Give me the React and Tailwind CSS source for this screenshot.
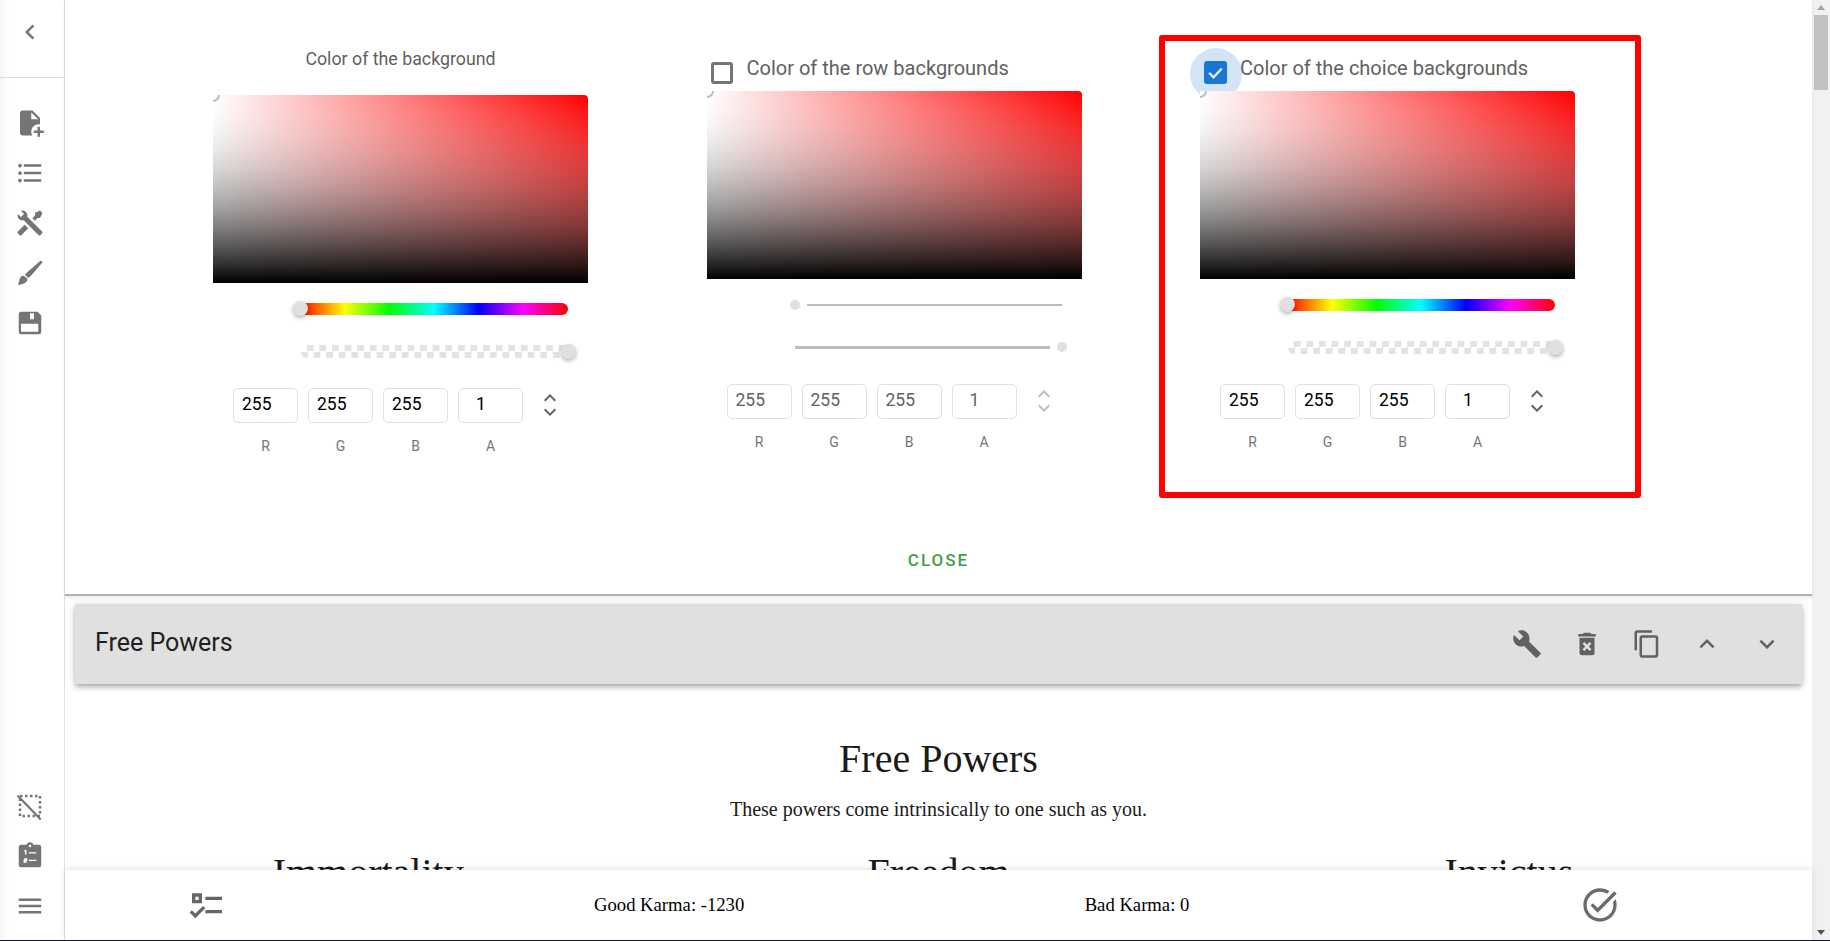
import React from 'react';

const Icon = ({ d, size = 30, className = '', children, fillRule }) => (
  <svg width={size} height={size} viewBox="0 0 24 24" fill="currentColor" className={`shrink-0 ${className}`}>
    {d && <path d={d} fillRule={fillRule} />}
    {children}
  </svg>
);

const paths = {
  chevronLeft: 'M15.41 7.41 14 6l-6 6 6 6 1.41-1.41L10.83 12z',
  filePlus: 'M14 2H6C4.9 2 4 2.9 4 4V20C4 21.1 4.9 22 6 22H13.8C13.3 21.1 13 20.1 13 19C13 15.7 15.7 13 19 13C19.3 13 19.7 13 20 13.1V8L14 2M13 9V3.5L18.5 9H13M20 15V18H23V20H20V23H18V20H15V18H18V15H20Z',
  list: 'M7,5H21V7H7V5M7,13V11H21V13H7M4,4.5A1.5,1.5 0 0,1 5.5,6A1.5,1.5 0 0,1 4,7.5A1.5,1.5 0 0,1 2.5,6A1.5,1.5 0 0,1 4,4.5M4,10.5A1.5,1.5 0 0,1 5.5,12A1.5,1.5 0 0,1 4,13.5A1.5,1.5 0 0,1 2.5,12A1.5,1.5 0 0,1 4,10.5M7,19V17H21V19H7M4,16.5A1.5,1.5 0 0,1 5.5,18A1.5,1.5 0 0,1 4,19.5A1.5,1.5 0 0,1 2.5,18A1.5,1.5 0 0,1 4,16.5Z',
  tools: 'M21.71 20.29L20.29 21.71A1 1 0 0 1 18.88 21.71L7 9.85A3.81 3.81 0 0 1 6 10A4 4 0 0 1 2.22 4.7L4.76 7.24L5.29 6.71L6.71 5.29L7.24 4.76L4.7 2.22A4 4 0 0 1 10 6A3.81 3.81 0 0 1 9.85 7L21.71 18.88A1 1 0 0 1 21.71 20.29M2.29 18.88A1 1 0 0 0 2.29 20.29L3.71 21.71A1 1 0 0 0 5.12 21.71L10.59 16.25L7.76 13.42M20 2L16 4V6L13.83 8.17L15.83 10.17L18 8H20L22 4Z',
  brush: 'M22.2 3.2L20.6 2L10 11.1C9.2 11.8 8.4 12.6 8 13.4L10.6 16C11.5 15.5 12.3 14.7 13 14ZM7 14.2C5.5 14.2 4.2 15.2 3.8 16.6C3.5 17.9 3.1 19.9 2.4 21.6C4.1 21.3 6.4 20.8 7.7 20C9.3 19.1 10.3 17.7 9.9 16.5Z',
  save: 'M5 3H18L21 6V19A2 2 0 0 1 19 21H5A2 2 0 0 1 3 19V5A2 2 0 0 1 5 3ZM12 4.2V9H15.2V4.2ZM4.8 12.5V19H18.6V12.5Z',
  menu: 'M3,6H21V8H3V6M3,11H21V13H3V11M3,16H21V18H3V16Z',
  rule: 'M3,5H9V11H3V5M5,7V9H7V7H5M11,7H21V9H11V7M11,15H21V17H11V15M5,20L1.5,16.5L2.91,15.09L5,17.17L9.59,12.59L11,14L5,20Z',
  taskAlt: 'M22 5.18 10.59 16.6l-4.24-4.24 1.41-1.41 2.83 2.83 10-10L22 5.18zm-2.21 5.04c.13.57.21 1.17.21 1.78 0 4.42-3.58 8-8 8s-8-3.58-8-8 3.58-8 8-8c1.58 0 3.04.46 4.28 1.25l1.44-1.44C16.1 2.67 14.13 2 12 2 6.48 2 2 6.48 2 12s4.48 10 10 10 10-4.48 10-10c0-1.19-.22-2.33-.6-3.39l-1.61 1.61z',
  wrench: 'M22.7 19l-9.1-9.1c.9-2.3.4-5-1.5-6.9-2-2-5-2.4-7.4-1.3L9 6 6 9 1.6 4.7C.4 7.1.9 10.1 2.9 12.1c1.9 1.9 4.6 2.4 6.9 1.5l9.1 9.1c.4.4 1 .4 1.4 0l2.3-2.3c.5-.4.5-1.1.1-1.4z',
  deleteForever: 'M19,4H15.5L14.5,3H9.5L8.5,4H5V6H19M6,19A2,2 0 0,0 8,21H16A2,2 0 0,0 18,19V7H6V19M8.46,11.88L9.87,10.47L12,12.59L14.12,10.47L15.53,11.88L13.41,14L15.53,16.12L14.12,17.53L12,15.41L9.88,17.53L8.47,16.12L10.59,14L8.46,11.88Z',
  copy: 'M16 1H4c-1.1 0-2 .9-2 2v14h2V3h12V1zm3 4H8c-1.1 0-2 .9-2 2v14c0 1.1.9 2 2 2h11c1.1 0 2-.9 2-2V7c0-1.1-.9-2-2-2zm0 16H8V7h11v14z',
  up: 'M7.41 15.41 12 10.83l4.59 4.58L18 14l-6-6-6 6z',
  down: 'M7.41 8.59 12 13.17l4.59-4.58L18 10l-6 6-6-6z',
  clipboard: 'M19,3H14.82C14.4,1.84 13.3,1 12,1C10.7,1 9.6,1.84 9.18,3H5A2,2 0 0,0 3,5V19A2,2 0 0,0 5,21H19A2,2 0 0,0 21,19V5A2,2 0 0,0 19,3M12,3A1,1 0 0,1 13,4A1,1 0 0,1 12,5A1,1 0 0,1 11,4A1,1 0 0,1 12,3Z',
};

const SelectionOff = () => (
  <svg width="30" height="30" viewBox="0 0 24 24" fill="none" stroke="currentColor" className="shrink-0">
    <rect x="4" y="4" width="16" height="16" strokeWidth="2" strokeDasharray="2 2" />
    <path d="M2 3.6 20.6 22.8" strokeWidth="1.8" />
  </svg>
);

const ClipboardNumbered = () => (
  <Icon d={paths.clipboard} fillRule="evenodd">
    <path d="M7.4 8.2 8.6 7.6V11M7.2 14.3H9.2V15.5H7.4V16.8H9.4M11 9.5H17M11 15.5H17" fill="none" stroke="#fff" strokeWidth="1.1" />
  </Icon>
);

const Sidebar = () => (
  <aside className="flex h-full w-[65px] shrink-0 flex-col border-r border-[#e0e0e0] bg-linear-to-r from-[#f5f5f5] to-white to-[14%] text-[#757575]">
    <div className="flex h-[78px] items-start border-b border-[#e0e0e0] pl-[15px] pt-[17px]">
      <Icon d={paths.chevronLeft} />
    </div>
    <div className="flex flex-col gap-[20px] pl-[15px] pt-[30px]">
      <Icon d={paths.filePlus} />
      <Icon d={paths.list} />
      <Icon d={paths.tools} />
      <Icon d={paths.brush} />
      <Icon d={paths.save} fillRule="evenodd" />
    </div>
    <div className="mt-auto flex flex-col gap-[20px] pb-[19px] pl-[15px]">
      <SelectionOff />
      <ClipboardNumbered />
      <Icon d={paths.menu} />
    </div>
  </aside>
);

const Thumb = ({ className }) => (
  <div className={`absolute h-[15px] w-[15px] rounded-full bg-[#e0e0e0] shadow-[0_2px_4px_rgba(0,0,0,0.3)] ${className}`} />
);

const Sliders = () => (
  <>
    <div className="relative ml-[87px] mt-[20px] h-[12px] w-[268px] rounded-[6px] bg-[linear-gradient(to_right,#f00,#ff0,#0f0,#0ff,#00f,#f0f,#f00)]">
      <Thumb className="-left-[7px] -top-[2px]" />
    </div>
    <div className="relative ml-[88px] mt-[30px] h-[13px] w-[268px] rounded-[6px] bg-[repeating-conic-gradient(#e3e3e3_0_25%,#fff_0_50%)] bg-[length:12.6px_12.6px]">
      <Thumb className="-right-[7px] -top-[1px]" />
    </div>
  </>
);

const DisabledSliders = () => (
  <>
    <div className="relative ml-[88px] mt-[20px] flex h-[12px] w-[268px] items-center pl-[12px]">
      <div className="absolute -left-[5px] top-[1px] h-[10px] w-[10px] rounded-full bg-[#e0e0e0]" />
      <div className="h-[2px] w-[255px] bg-[#bdbdbd]" />
    </div>
    <div className="relative ml-[88px] mt-[30px] flex h-[13px] w-[268px] items-center">
      <div className="h-[3px] w-[255px] bg-[#bdbdbd]" />
      <div className="absolute left-[262px] top-[1px] h-[10px] w-[10px] rounded-full bg-[#e0e0e0]" />
    </div>
  </>
);

const Channel = ({ label, value, muted, indent }) => (
  <div className="flex w-[65px] flex-col items-center">
    <div
      className={`flex h-[35px] w-full items-center rounded-[5px] border border-[#e0e0e0] pb-[2px] text-[17.5px] leading-none ${
        indent ? 'pl-[17px]' : 'pl-[8px]'
      } ${muted ? 'text-[#616161]' : 'text-black'}`}
    >
      {value}
    </div>
    <div className="mt-[13px] text-[14px] leading-[20px] text-[#757575]">{label}</div>
  </div>
);

const Inputs = ({ muted }) => (
  <div className="ml-[20px] mt-[30px] flex items-start">
    <div className="flex gap-[10px]">
      <Channel label="R" value="255" muted={muted} />
      <Channel label="G" value="255" muted={muted} />
      <Channel label="B" value="255" muted={muted} />
      <Channel label="A" value="1" muted={muted} indent />
    </div>
    <div className={`ml-[15px] -mt-[2px] flex flex-col items-center ${muted ? 'text-[#bdbdbd]' : 'text-[#616161]'}`}>
      <Icon d={paths.up} size={24} />
      <Icon d={paths.down} size={24} className="-mt-[10px]" />
    </div>
  </div>
);

const Saturation = () => (
  <div className="relative z-10 h-[188px] w-[375px] overflow-hidden rounded-tr-[4px] bg-[linear-gradient(to_bottom,rgba(255,255,255,0),rgba(230,230,230,0.1),rgba(204,204,204,0.2),rgba(179,179,179,0.3),rgba(153,153,153,0.4),rgba(128,128,128,0.5),rgba(102,102,102,0.6),rgba(77,77,77,0.7),rgba(51,51,51,0.8),rgba(26,26,26,0.9),#000),linear-gradient(to_right,#fff,#f00)]">
    <div className="absolute -left-[7px] -top-[7px] h-[14px] w-[14px] rounded-full border-2 border-[#bdbdbd] bg-white" />
  </div>
);

const Picker = ({ title, checkbox, checked }) => (
  <div className="relative flex w-[375px] flex-col pt-[47px]">
    {checkbox ? (
      <div className="relative flex h-[44px] items-start">
        {checked && <div className="absolute left-[-10px] top-[1px] h-[52px] w-[52px] rounded-full bg-[#d2e4f6]" />}
        {checked ? (
          <div className="relative ml-[4px] mt-[14px] flex h-[23px] w-[23px] items-center justify-center rounded-[3px] bg-[#1976d2]">
            <svg width="19" height="19" viewBox="0 0 24 24" fill="none" stroke="#e3eefa" strokeWidth="3">
              <path d="M4 12.5 9.5 18 20 7" />
            </svg>
          </div>
        ) : (
          <div className="ml-[4px] mt-[15px] h-[22px] w-[22px] rounded-[3px] border-[3px] border-[#757575]" />
        )}
        <div className={`relative mt-[7px] text-[20px] leading-[28px] text-[#616161] ${checked ? 'ml-[13px]' : 'ml-[14px]'}`}>{title}</div>
      </div>
    ) : (
      <div className="mb-[24px] h-[24px] text-center text-[17.8px] leading-[24px] text-[#616161]">{title}</div>
    )}
    <Saturation />
    {checkbox && !checked ? <DisabledSliders /> : <Sliders />}
    <Inputs muted={checkbox && !checked} />
  </div>
);

const BarButton = ({ d }) => (
  <div className="flex h-[60px] w-[60px] items-center justify-center text-[#616161]">
    <Icon d={d} />
  </div>
);

const App = () => (
  <div className="flex h-[941px] w-full flex-col overflow-hidden bg-white font-['Roboto',sans-serif]">
    <div className="flex h-[940px] w-full">
      <Sidebar />
      <main className="relative flex min-w-0 flex-1 flex-col">
        <section className="relative h-[596px] shrink-0 border-b-2 border-[#b0b0b0] shadow-[0_2px_4px_rgba(0,0,0,0.08)]">
          <div className="flex h-[550px] gap-[118.5px] pl-[148px]">
            <Picker title="Color of the background" />
            <Picker title="Color of the row backgrounds" checkbox />
            <Picker title="Color of the choice backgrounds" checkbox checked />
          </div>
          <div className="text-center text-[17px] font-medium leading-[20px] tracking-[2px] text-[#43a047]">CLOSE</div>
          {/* highlight around the third picker */}
          <div className="pointer-events-none absolute left-[1094px] top-[35px] z-20 h-[463px] w-[482px] rounded-[3px] border-[6px] border-[#f00]" />
        </section>

        <div className="mx-[10px] mt-[8px] flex h-[80px] shrink-0 items-center justify-between bg-[#e0e0e0] pl-[20px] pr-[5px] shadow-[0_2px_4px_-1px_rgba(0,0,0,0.2),0_4px_5px_0_rgba(0,0,0,0.14),0_1px_10px_0_rgba(0,0,0,0.12)]">
          <div className="pb-[2px] text-[25px] leading-[32px] text-[#212121]">Free Powers</div>
          <div className="flex">
            <BarButton d={paths.wrench} />
            <BarButton d={paths.deleteForever} />
            <BarButton d={paths.copy} />
            <BarButton d={paths.up} />
            <BarButton d={paths.down} />
          </div>
        </div>

        <div className="min-h-0 flex-1 overflow-hidden pt-[51px] text-center font-['Liberation_Serif',serif] text-[#1a1a1a]">
          <h1 className="text-[40px] leading-[48px]">Free Powers</h1>
          <p className="mt-[14px] text-[20px] leading-[24px]">These powers come intrinsically to one such as you.</p>
          <div className="mt-[28px] grid grid-cols-3 px-[18px] text-[40px] leading-[48px]">
            <div>Immortality</div>
            <div>Freedom</div>
            <div>Invictus</div>
          </div>
        </div>

        <footer className="relative flex h-[70px] shrink-0 items-center bg-white font-['Liberation_Serif',serif] text-[18.67px] text-black shadow-[0_-1px_6px_rgba(0,0,0,0.12)]">
          <div className="ml-[122px] text-[#666]">
            <Icon d={paths.rule} size={40} />
          </div>
          <div className="ml-[367px] w-[150px] whitespace-nowrap text-center">Good Karma: -1230</div>
          <div className="ml-[340px] w-[106px] whitespace-nowrap text-center">Bad Karma: 0</div>
          <div className="ml-[390px] text-[#6b6b6b]">
            <Icon d={paths.taskAlt} size={40} />
          </div>
        </footer>
      </main>

      <div className="flex h-full w-[18px] shrink-0 flex-col items-center bg-[#f1f1f1]">
        <div className="mt-[5px] h-0 w-0 border-x-[4.5px] border-b-[5px] border-x-transparent border-b-[#a3a3a3]" />
        <div className="mt-[5px] h-[75px] w-[14px] bg-[#c1c1c1]" />
        <div className="mb-[5px] mt-auto h-0 w-0 border-x-[4.5px] border-t-[5px] border-x-transparent border-t-[#505050]" />
      </div>
    </div>
    <div className="h-px shrink-0 bg-[#14141e]" />
  </div>
);

export default App;
